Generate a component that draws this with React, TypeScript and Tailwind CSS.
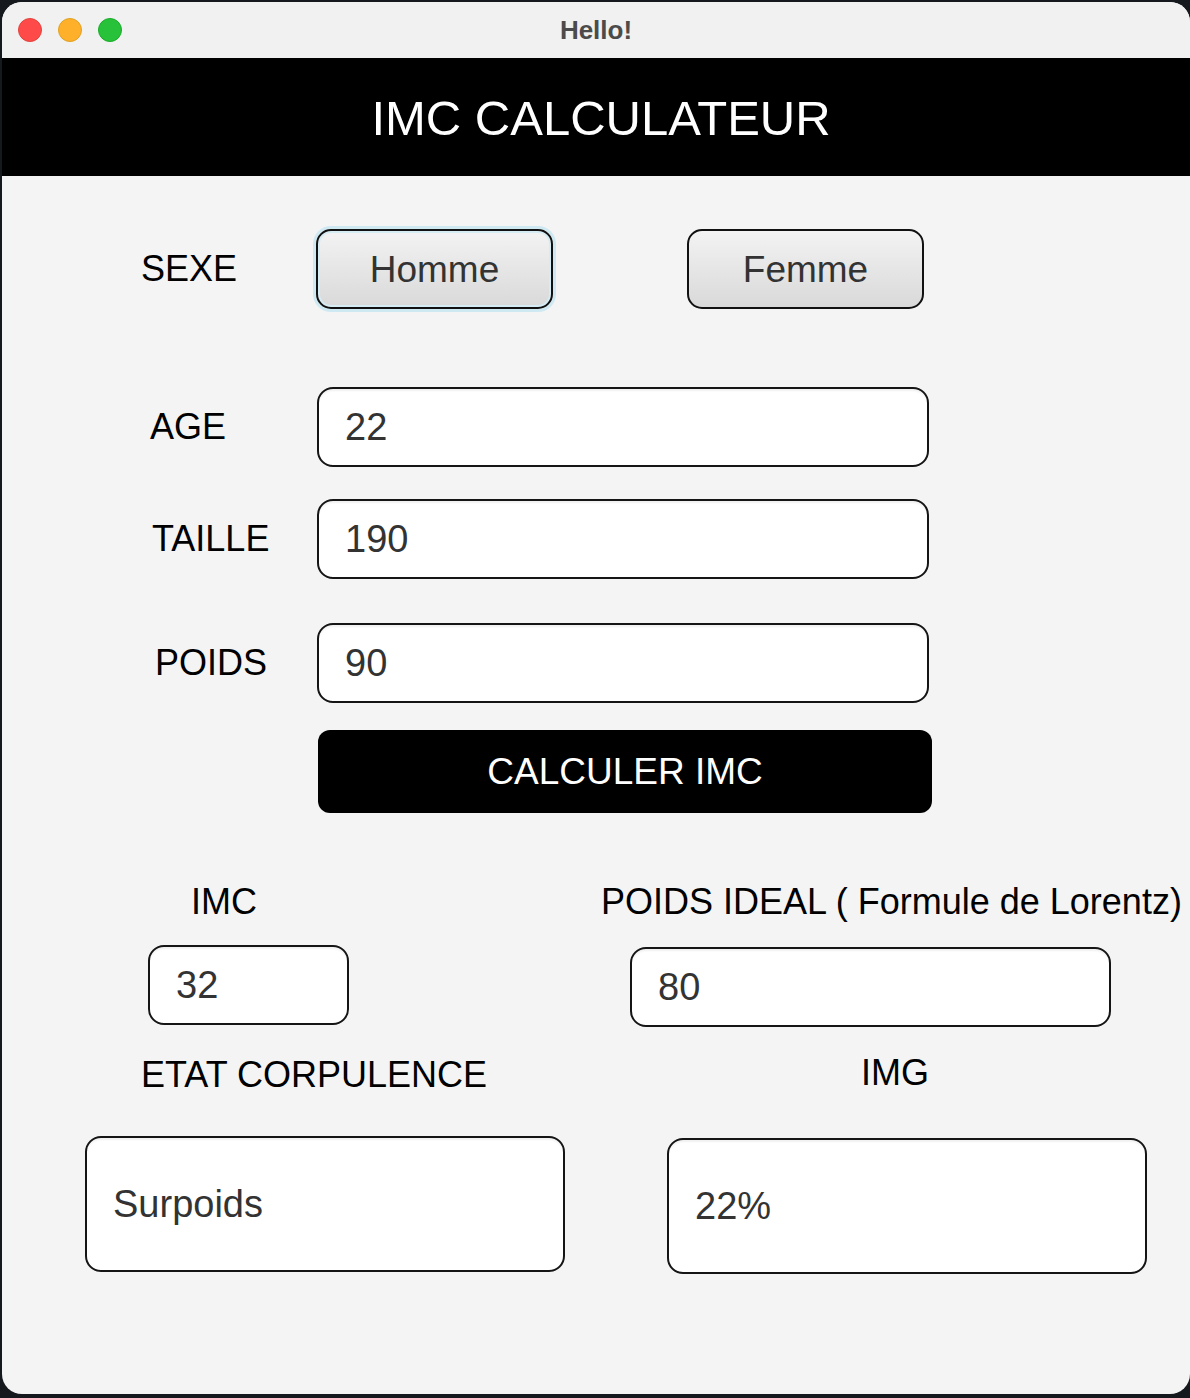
import React from "react";

const font = { fontFamily: '"Liberation Sans", Arial, sans-serif' };

function Field({ value, className }: { value: string; className: string }) {
  return (
    <div
      className={`flex items-center rounded-[16px] border-2 border-[#151515] bg-white pl-[26px] text-[38px] text-[#333333] shadow-[inset_0_3px_2px_-1px_rgba(0,0,0,0.06)] ${className}`}
    >
      {value}
    </div>
  );
}

function SexButton({ label, focused }: { label: string; focused?: boolean }) {
  return (
    <div
      className={`flex h-[80px] w-[237px] items-center justify-center rounded-[15px] border-2 border-[#111111] bg-gradient-to-b from-[#f3f3f3] to-[#d9d9d9] pt-[2px] text-[37px] text-[#333333] ${
        focused ? "shadow-[0_0_0_3px_#cfe9f3,inset_0_0_0_2px_#d6ecf4]" : ""
      }`}
    >
      {label}
    </div>
  );
}

export default function App() {
  return (
    <div className="min-h-[1398px] w-[1190px] bg-[#15181c] pt-[2px] pl-[2px]" style={font}>
      <div className="flex h-[1392px] w-[1188px] flex-col overflow-hidden rounded-[20px] bg-[#f4f4f4]">
        {/* title bar */}
        <div className="relative flex h-[56px] items-center justify-center bg-[#f0f1f0]">
          <div className="absolute left-[16px] top-[16px] flex gap-[16px]">
            <span className="h-[24px] w-[24px] rounded-full border border-[#e0443e] bg-[#ff4a4a]" />
            <span className="h-[24px] w-[24px] rounded-full border border-[#dea123] bg-[#ffb02a]" />
            <span className="h-[24px] w-[24px] rounded-full border border-[#1aab29] bg-[#28c23a]" />
          </div>
          <span className="text-[26px] font-bold text-[#4b4b4b]">Hello!</span>
        </div>

        {/* header */}
        <div className="flex h-[118px] items-center justify-center bg-black">
          <h1 className="pl-[10px] pt-[3px] text-[49px] text-white">IMC CALCULATEUR</h1>
        </div>

        {/* sexe */}
        <div className="mt-[53px] flex h-[80px] items-center pl-[139px]">
          <span className="w-[175px] text-[36px] text-black">SEXE</span>
          <SexButton label="Homme" focused />
          <div className="w-[134px]" />
          <SexButton label="Femme" />
        </div>

        {/* age */}
        <div className="mt-[78px] flex h-[80px] items-center pl-[148px]">
          <span className="w-[167px] text-[36px] text-black">AGE</span>
          <Field value="22" className="h-[80px] w-[612px]" />
        </div>

        {/* taille */}
        <div className="mt-[32px] flex h-[80px] items-center pl-[150px]">
          <span className="w-[165px] text-[36px] text-black">TAILLE</span>
          <Field value="190" className="h-[80px] w-[612px]" />
        </div>

        {/* poids */}
        <div className="mt-[44px] flex h-[80px] items-center pl-[153px]">
          <span className="w-[162px] text-[36px] text-black">POIDS</span>
          <Field value="90" className="h-[80px] w-[612px]" />
        </div>

        {/* calculer */}
        <div className="mt-[27px] pl-[316px]">
          <button className="flex h-[83px] w-[614px] items-center justify-center rounded-[12px] bg-black text-[37px] text-white">
            CALCULER IMC
          </button>
        </div>

        {/* imc / poids ideal labels */}
        <div className="mt-[69px] flex h-[40px] items-center">
          <span className="ml-[189px] w-[410px] text-[36px] text-black">IMC</span>
          <span className="whitespace-nowrap text-[36px] text-black">POIDS IDEAL ( Formule de Lorentz)</span>
        </div>

        <div className="mt-[23px] flex items-start">
          <Field value="32" className="ml-[146px] h-[80px] w-[201px]" />
          <Field value="80" className="ml-[281px] mt-[2px] h-[80px] w-[481px]" />
        </div>

        {/* etat / img labels */}
        <div className="mt-[28px] flex h-[40px] items-center">
          <span className="ml-[139px] w-[720px] text-[36px] text-black">ETAT CORPULENCE</span>
          <span className="-mt-[4px] text-[36px] text-black">IMG</span>
        </div>

        <div className="mt-[41px] flex items-start">
          <Field value="Surpoids" className="ml-[83px] h-[136px] w-[480px]" />
          <Field value="22%" className="ml-[102px] mt-[2px] h-[136px] w-[480px]" />
        </div>
      </div>
    </div>
  );
}
